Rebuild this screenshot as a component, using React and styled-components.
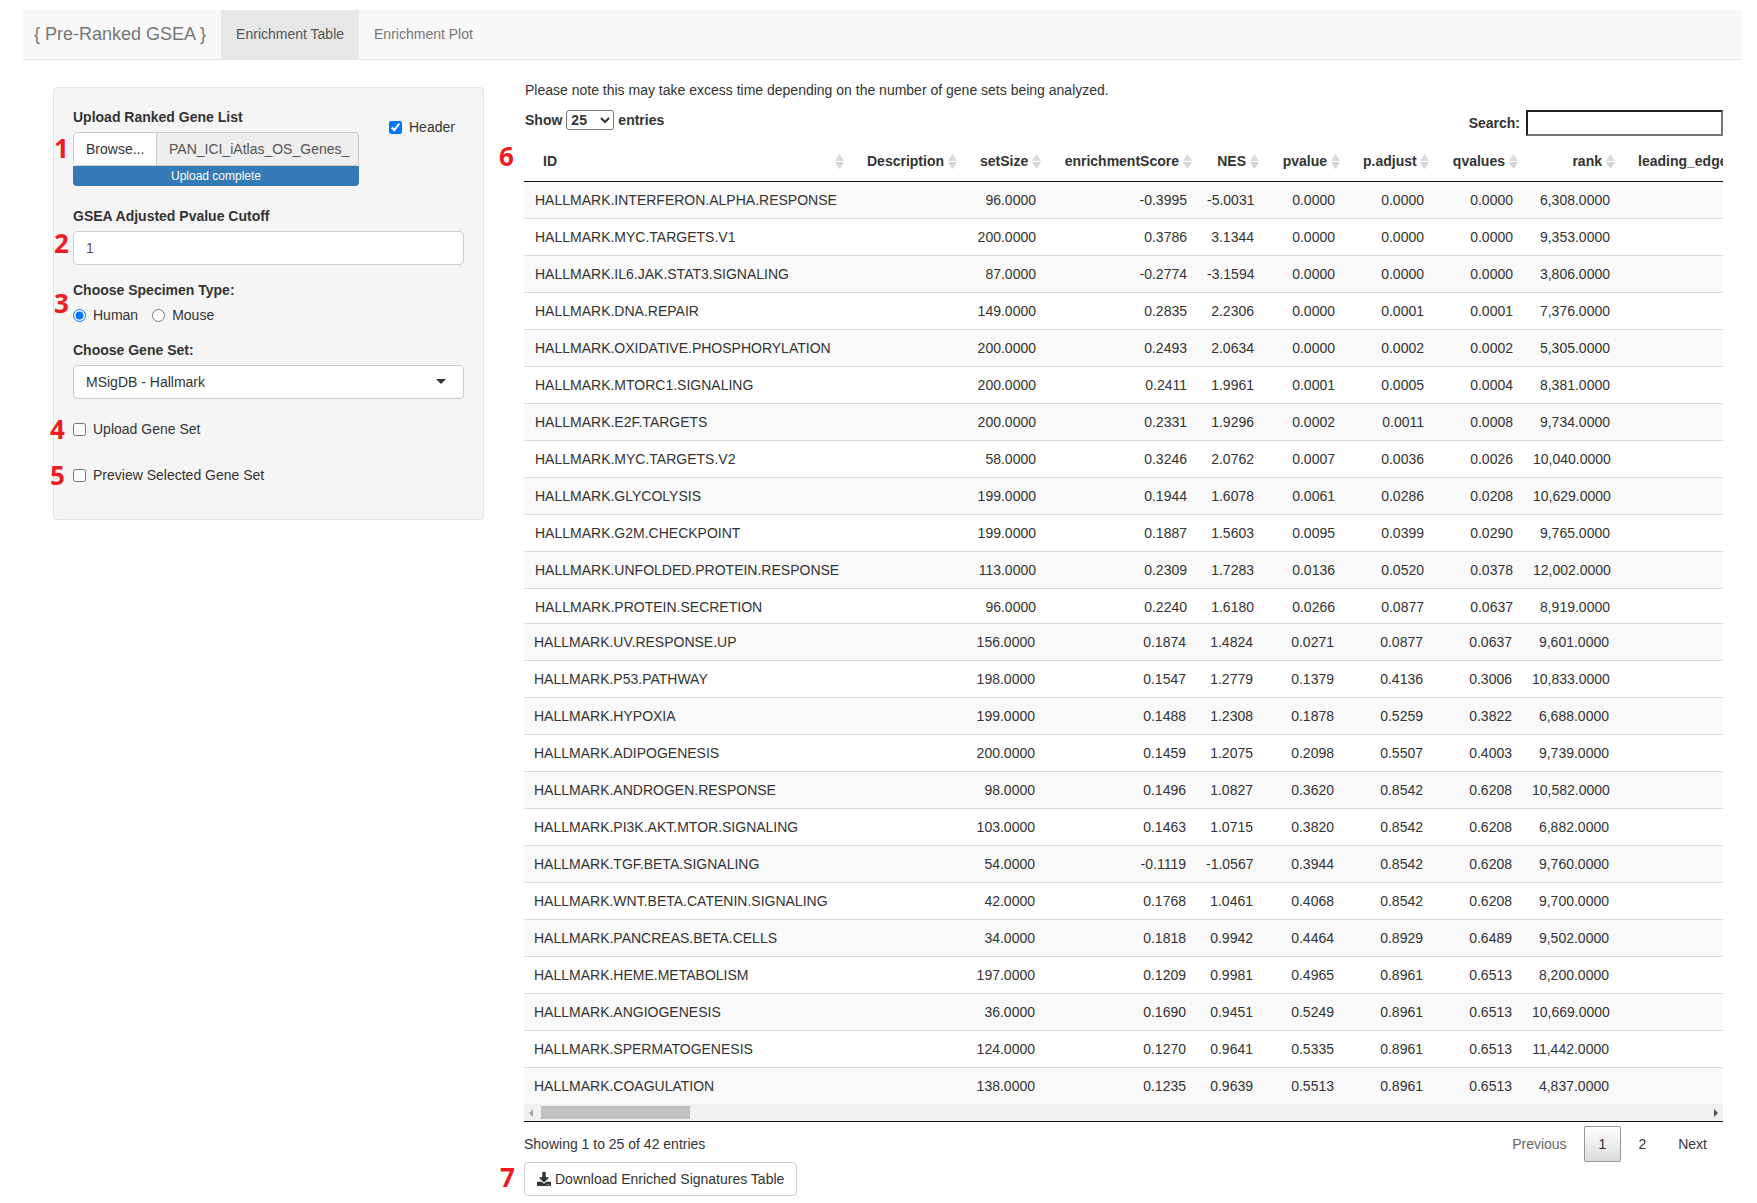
import React from "react";
import styled, { createGlobalStyle } from "styled-components";
import { FaDownload } from "react-icons/fa";

const Global = createGlobalStyle`
  html, body { margin: 0; padding: 0; background: #fff; }
  body { font-family: "Liberation Sans", Arial, sans-serif; font-size: 14px; line-height: 20px; color: #333; }
  * { box-sizing: border-box; }
`;

const Page = styled.div`
  position: relative;
  width: 1757px;
  height: 1203px;
  padding: 10px 15px 0 23px;
  overflow: hidden;
`;
const Navbar = styled.nav`
  display: flex;
  height: 50px;
  background: #f8f8f8;
  border-bottom: 1px solid #e7e7e7;
`;
const Brand = styled.div`
  font-size: 18px;
  line-height: 49px;
  color: #777;
  padding: 0 15px 0 11px;
`;
const Tab = styled.div`
  line-height: 49px;
  padding: 0 15px;
  color: ${p => (p.$active ? "#555" : "#777")};
  background: ${p => (p.$active ? "#e7e7e7" : "transparent")};
`;
const Content = styled.div`
  display: flex;
  align-items: flex-start;
  gap: 40px;
  margin: 20px 0 0 30px;
`;
const Sidebar = styled.aside`
  width: 431px;
  margin-top: 7px;
  padding: 19px 19px 34px;
  background: #f5f5f5;
  border: 1px solid #e3e3e3;
  border-radius: 4px;
`;
const FieldLabel = styled.div`
  font-weight: 700;
  margin-top: ${p => p.$top || 0}px;
  margin-bottom: 5px;
`;
const UploadRow = styled.div`
  display: flex;
`;
const UploadCol = styled.div`
  width: 286px;
`;
const HeaderCheck = styled.label`
  display: flex;
  align-items: center;
  height: 20px;
  gap: 7px;
  margin: 10px 0 0 30px;
`;
const FileGroup = styled.div`
  display: flex;
  height: 34px;
`;
const BrowseBtn = styled.div`
  width: 84px;
  padding: 6px 12px;
  background: #fff;
  border: 1px solid #ccc;
  border-radius: 4px 0 0 4px;
`;
const FileName = styled.div`
  flex: 1;
  min-width: 0;
  padding: 6px 12px;
  background: #eee;
  color: #555;
  border: 1px solid #ccc;
  border-left: 0;
  border-radius: 0 4px 4px 0;
  overflow: hidden;
  white-space: nowrap;
`;
const Progress = styled.div`
  height: 20px;
  background: #337ab7;
  color: #fff;
  font-size: 12px;
  line-height: 20px;
  text-align: center;
  border-radius: 0 0 4px 4px;
`;
const TextInput = styled.div`
  height: 34px;
  padding: 6px 12px;
  background: #fff;
  color: #555;
  border: 1px solid #ccc;
  border-radius: 4px;
`;
const RadioRow = styled.div`
  display: flex;
  align-items: center;
  height: 20px;
`;
const Option = styled.label`
  display: flex;
  align-items: center;
  height: 20px;
  gap: 7px;
  margin-top: ${p => p.$top || 0}px;
  margin-right: ${p => p.$right || 0}px;
`;
const NativeCheck = styled.input`
  width: 13px;
  height: 13px;
  margin: 0;
`;
const SelectBox = styled.div`
  display: flex;
  align-items: center;
  justify-content: space-between;
  height: 34px;
  padding: 0 17px 0 12px;
  background: #fff;
  border: 1px solid #ccc;
  border-radius: 4px;
`;
const Caret = styled.span`
  width: 0;
  height: 0;
  margin-bottom: 2px;
  border-left: 5px solid transparent;
  border-right: 5px solid transparent;
  border-top: 5px solid #333;
`;

const Main = styled.main`
  width: 1199px;
`;
const Note = styled.div`
  height: 20px;
  padding-left: 1px;
`;
const Toolbar = styled.div`
  display: flex;
  justify-content: space-between;
  align-items: flex-start;
  height: 26px;
  margin-top: 10px;
  padding-left: 1px;
  font-weight: 700;
`;
const LengthGroup = styled.div`
  display: flex;
  align-items: center;
  gap: 4px;
  height: 20px;
`;
const LengthSelect = styled.select`
  width: 48px;
  height: 20px;
  padding: 0;
  font: 700 14px "Liberation Sans", Arial, sans-serif;
  color: #333;
  background: #fff;
  border: 1px solid #767676;
  border-radius: 3px;
`;
const SearchGroup = styled.div`
  display: flex;
  align-items: center;
  gap: 6px;
  height: 26px;
`;
const SearchInput = styled.div`
  width: 197px;
  height: 26px;
  background: #fff;
  border-style: solid;
  border-width: 2px;
  border-color: #1f1f1f #767676 #767676 #1f1f1f;
`;
const TableClip = styled.div`
  width: 1199px;
  margin-top: 5px;
  overflow: hidden;
  border-bottom: 1px solid #111;
`;
const Table = styled.table`
  table-layout: fixed;
  width: 1296px;
  border-collapse: separate;
  border-spacing: 0;
`;
const Th = styled.th`
  position: relative;
  padding: 10px 18px 10px ${p => (p.$inset ? 19 : 18)}px;
  font-weight: 700;
  text-align: ${p => p.$align || "right"};
  border-bottom: 1px solid #111;
  white-space: nowrap;
`;
const SortIcon = styled.svg`
  position: absolute;
  right: 5px;
  top: 13px;
  width: 9px;
  height: 15px;
`;
const Row = styled.tr`
  background: ${p => (p.$striped ? "#f9f9f9" : "#fff")};
`;
const Td = styled.td`
  padding: 8px ${p => (p.$shifted ? "11px" : "10px")} ${p => (p.$short ? "6px" : "8px")}
    ${p => (p.$inset ? 11 : 10) - (p.$shifted ? 1 : 0)}px;
  text-align: ${p => p.$align || "right"};
  border-top: ${p => (p.$first ? "0" : "1px solid #ddd")};
  white-space: nowrap;
`;
const ScrollTrack = styled.div`
  display: flex;
  align-items: center;
  height: 17px;
  padding-left: 5px;
  background: #f1f1f1;
`;
const ArrowLeft = styled.span`
  width: 0;
  height: 0;
  border-top: 4px solid transparent;
  border-bottom: 4px solid transparent;
  border-right: 4px solid #a3a3a3;
`;
const ScrollThumb = styled.div`
  width: 149px;
  height: 13px;
  margin-left: 8px;
  background: #c1c1c1;
`;
const ArrowRight = styled.span`
  width: 0;
  height: 0;
  margin-left: auto;
  margin-right: 5px;
  border-top: 4px solid transparent;
  border-bottom: 4px solid transparent;
  border-left: 4px solid #505050;
`;
const Footer = styled.div`
  display: flex;
  justify-content: space-between;
  height: 36px;
  margin-top: 4px;
`;
const Info = styled.div`
  margin-top: 8px;
`;
const Pagination = styled.div`
  display: flex;
  align-items: center;
  gap: 2px;
  padding-right: 1px;
`;
const PageBtn = styled.div`
  height: 36px;
  padding: ${p => (p.$current ? "7px 14px" : "8px 15px")};
  color: ${p => (p.$disabled ? "#666" : "#333")};
  border: ${p => (p.$current ? "1px solid #979797" : "0")};
  border-radius: 2px;
  background: ${p => (p.$current ? "linear-gradient(to bottom, #fff 0%, #dcdcdc 100%)" : "transparent")};
`;
const DownloadBtn = styled.div`
  display: inline-flex;
  align-items: center;
  gap: 4px;
  height: 34px;
  padding: 0 12px;
  background: #fff;
  border: 1px solid #ccc;
  border-radius: 4px;
`;
const Marker = styled.span`
  position: absolute;
  left: ${p => p.$x}px;
  top: ${p => p.$y}px;
  font: 700 26px/30px "Open Sans", sans-serif;
  color: #ed1c24;
`;

const columns = [
  { name: "ID", width: 325, align: "left", inset: true },
  { name: "Description", width: 113 },
  { name: "setSize", width: 84 },
  { name: "enrichmentScore", width: 151 },
  { name: "NES", width: 67 },
  { name: "pvalue", width: 81 },
  { name: "p.adjust", width: 89 },
  { name: "qvalues", width: 89 },
  { name: "rank", width: 97 },
  { name: "leading_edge", width: 200, align: "left" },
];

const rows = [
  ["HALLMARK.INTERFERON.ALPHA.RESPONSE", "96.0000", "-0.3995", "-5.0031", "0.0000", "0.0000", "0.0000", "6,308.0000"],
  ["HALLMARK.MYC.TARGETS.V1", "200.0000", "0.3786", "3.1344", "0.0000", "0.0000", "0.0000", "9,353.0000"],
  ["HALLMARK.IL6.JAK.STAT3.SIGNALING", "87.0000", "-0.2774", "-3.1594", "0.0000", "0.0000", "0.0000", "3,806.0000"],
  ["HALLMARK.DNA.REPAIR", "149.0000", "0.2835", "2.2306", "0.0000", "0.0001", "0.0001", "7,376.0000"],
  ["HALLMARK.OXIDATIVE.PHOSPHORYLATION", "200.0000", "0.2493", "2.0634", "0.0000", "0.0002", "0.0002", "5,305.0000"],
  ["HALLMARK.MTORC1.SIGNALING", "200.0000", "0.2411", "1.9961", "0.0001", "0.0005", "0.0004", "8,381.0000"],
  ["HALLMARK.E2F.TARGETS", "200.0000", "0.2331", "1.9296", "0.0002", "0.0011", "0.0008", "9,734.0000"],
  ["HALLMARK.MYC.TARGETS.V2", "58.0000", "0.3246", "2.0762", "0.0007", "0.0036", "0.0026", "10,040.0000"],
  ["HALLMARK.GLYCOLYSIS", "199.0000", "0.1944", "1.6078", "0.0061", "0.0286", "0.0208", "10,629.0000"],
  ["HALLMARK.G2M.CHECKPOINT", "199.0000", "0.1887", "1.5603", "0.0095", "0.0399", "0.0290", "9,765.0000"],
  ["HALLMARK.UNFOLDED.PROTEIN.RESPONSE", "113.0000", "0.2309", "1.7283", "0.0136", "0.0520", "0.0378", "12,002.0000"],
  ["HALLMARK.PROTEIN.SECRETION", "96.0000", "0.2240", "1.6180", "0.0266", "0.0877", "0.0637", "8,919.0000"],
  ["HALLMARK.UV.RESPONSE.UP", "156.0000", "0.1874", "1.4824", "0.0271", "0.0877", "0.0637", "9,601.0000"],
  ["HALLMARK.P53.PATHWAY", "198.0000", "0.1547", "1.2779", "0.1379", "0.4136", "0.3006", "10,833.0000"],
  ["HALLMARK.HYPOXIA", "199.0000", "0.1488", "1.2308", "0.1878", "0.5259", "0.3822", "6,688.0000"],
  ["HALLMARK.ADIPOGENESIS", "200.0000", "0.1459", "1.2075", "0.2098", "0.5507", "0.4003", "9,739.0000"],
  ["HALLMARK.ANDROGEN.RESPONSE", "98.0000", "0.1496", "1.0827", "0.3620", "0.8542", "0.6208", "10,582.0000"],
  ["HALLMARK.PI3K.AKT.MTOR.SIGNALING", "103.0000", "0.1463", "1.0715", "0.3820", "0.8542", "0.6208", "6,882.0000"],
  ["HALLMARK.TGF.BETA.SIGNALING", "54.0000", "-0.1119", "-1.0567", "0.3944", "0.8542", "0.6208", "9,760.0000"],
  ["HALLMARK.WNT.BETA.CATENIN.SIGNALING", "42.0000", "0.1768", "1.0461", "0.4068", "0.8542", "0.6208", "9,700.0000"],
  ["HALLMARK.PANCREAS.BETA.CELLS", "34.0000", "0.1818", "0.9942", "0.4464", "0.8929", "0.6489", "9,502.0000"],
  ["HALLMARK.HEME.METABOLISM", "197.0000", "0.1209", "0.9981", "0.4965", "0.8961", "0.6513", "8,200.0000"],
  ["HALLMARK.ANGIOGENESIS", "36.0000", "0.1690", "0.9451", "0.5249", "0.8961", "0.6513", "10,669.0000"],
  ["HALLMARK.SPERMATOGENESIS", "124.0000", "0.1270", "0.9641", "0.5335", "0.8961", "0.6513", "11,442.0000"],
  ["HALLMARK.COAGULATION", "138.0000", "0.1235", "0.9639", "0.5513", "0.8961", "0.6513", "4,837.0000"],
];

const markers = [
  ["1", 54, 133], ["2", 54, 228], ["3", 54, 288], ["4", 50, 414], ["5", 50, 460], ["6", 499, 141], ["7", 500, 1162],
];

const Sort = () => (
  <SortIcon viewBox="0 0 9 15">
    <path d="M4.5 0 L9 7 L0 7 Z" fill="#dadada" />
    <path d="M4.5 15 L9 8 L0 8 Z" fill="#d4d4d4" />
  </SortIcon>
);

export default function App() {
  return (
    <Page>
      <Global />
      <Navbar>
        <Brand>{"{ Pre-Ranked GSEA }"}</Brand>
        <Tab $active>Enrichment Table</Tab>
        <Tab>Enrichment Plot</Tab>
      </Navbar>
      <Content>
        <Sidebar>
          <UploadRow>
            <UploadCol>
              <FieldLabel>Upload Ranked Gene List</FieldLabel>
              <FileGroup>
                <BrowseBtn>Browse...</BrowseBtn>
                <FileName>PAN_ICI_iAtlas_OS_Genes_</FileName>
              </FileGroup>
              <Progress>Upload complete</Progress>
            </UploadCol>
            <HeaderCheck>
              <NativeCheck type="checkbox" defaultChecked />
              Header
            </HeaderCheck>
          </UploadRow>
          <FieldLabel $top={20}>GSEA Adjusted Pvalue Cutoff</FieldLabel>
          <TextInput>1</TextInput>
          <FieldLabel $top={15}>Choose Specimen Type:</FieldLabel>
          <RadioRow>
            <Option $right={14}>
              <NativeCheck type="radio" name="specimen" defaultChecked />
              Human
            </Option>
            <Option>
              <NativeCheck type="radio" name="specimen" />
              Mouse
            </Option>
          </RadioRow>
          <FieldLabel $top={15}>Choose Gene Set:</FieldLabel>
          <SelectBox>
            MSigDB - Hallmark
            <Caret />
          </SelectBox>
          <Option $top={20}>
            <NativeCheck type="checkbox" />
            Upload Gene Set
          </Option>
          <Option $top={26}>
            <NativeCheck type="checkbox" />
            Preview Selected Gene Set
          </Option>
        </Sidebar>
        <Main>
          <Note>Please note this may take excess time depending on the number of gene sets being analyzed.</Note>
          <Toolbar>
            <LengthGroup>
              Show
              <LengthSelect defaultValue="25">
                <option>10</option>
                <option>25</option>
                <option>50</option>
                <option>100</option>
              </LengthSelect>
              entries
            </LengthGroup>
            <SearchGroup>
              Search:
              <SearchInput />
            </SearchGroup>
          </Toolbar>
          <TableClip>
            <Table>
              <colgroup>
                {columns.map(c => (
                  <col key={c.name} style={{ width: c.width }} />
                ))}
              </colgroup>
              <thead>
                <tr>
                  {columns.map(c => (
                    <Th key={c.name} $align={c.align} $inset={c.inset}>
                      {c.name}
                      <Sort />
                    </Th>
                  ))}
                </tr>
              </thead>
              <tbody>
                {rows.map((r, i) => {
                  const common = { $first: i === 0, $short: i === 11, $shifted: i > 11 };
                  return (
                    <Row key={r[0]} $striped={i % 2 === 0}>
                      <Td {...common} $align="left" $inset>{r[0]}</Td>
                      <Td {...common} />
                      {r.slice(1).map((v, j) => (
                        <Td {...common} key={j}>{v}</Td>
                      ))}
                      <Td {...common} />
                    </Row>
                  );
                })}
              </tbody>
            </Table>
            <ScrollTrack>
              <ArrowLeft />
              <ScrollThumb />
              <ArrowRight />
            </ScrollTrack>
          </TableClip>
          <Footer>
            <Info>Showing 1 to 25 of 42 entries</Info>
            <Pagination>
              <PageBtn $disabled>Previous</PageBtn>
              <PageBtn $current>1</PageBtn>
              <PageBtn>2</PageBtn>
              <PageBtn>Next</PageBtn>
            </Pagination>
          </Footer>
          <DownloadBtn>
            <FaDownload size={14} />
            Download Enriched Signatures Table
          </DownloadBtn>
        </Main>
      </Content>
      {markers.map(([t, x, y]) => (
        <Marker key={t} $x={x} $y={y}>{t}</Marker>
      ))}
    </Page>
  );
}
